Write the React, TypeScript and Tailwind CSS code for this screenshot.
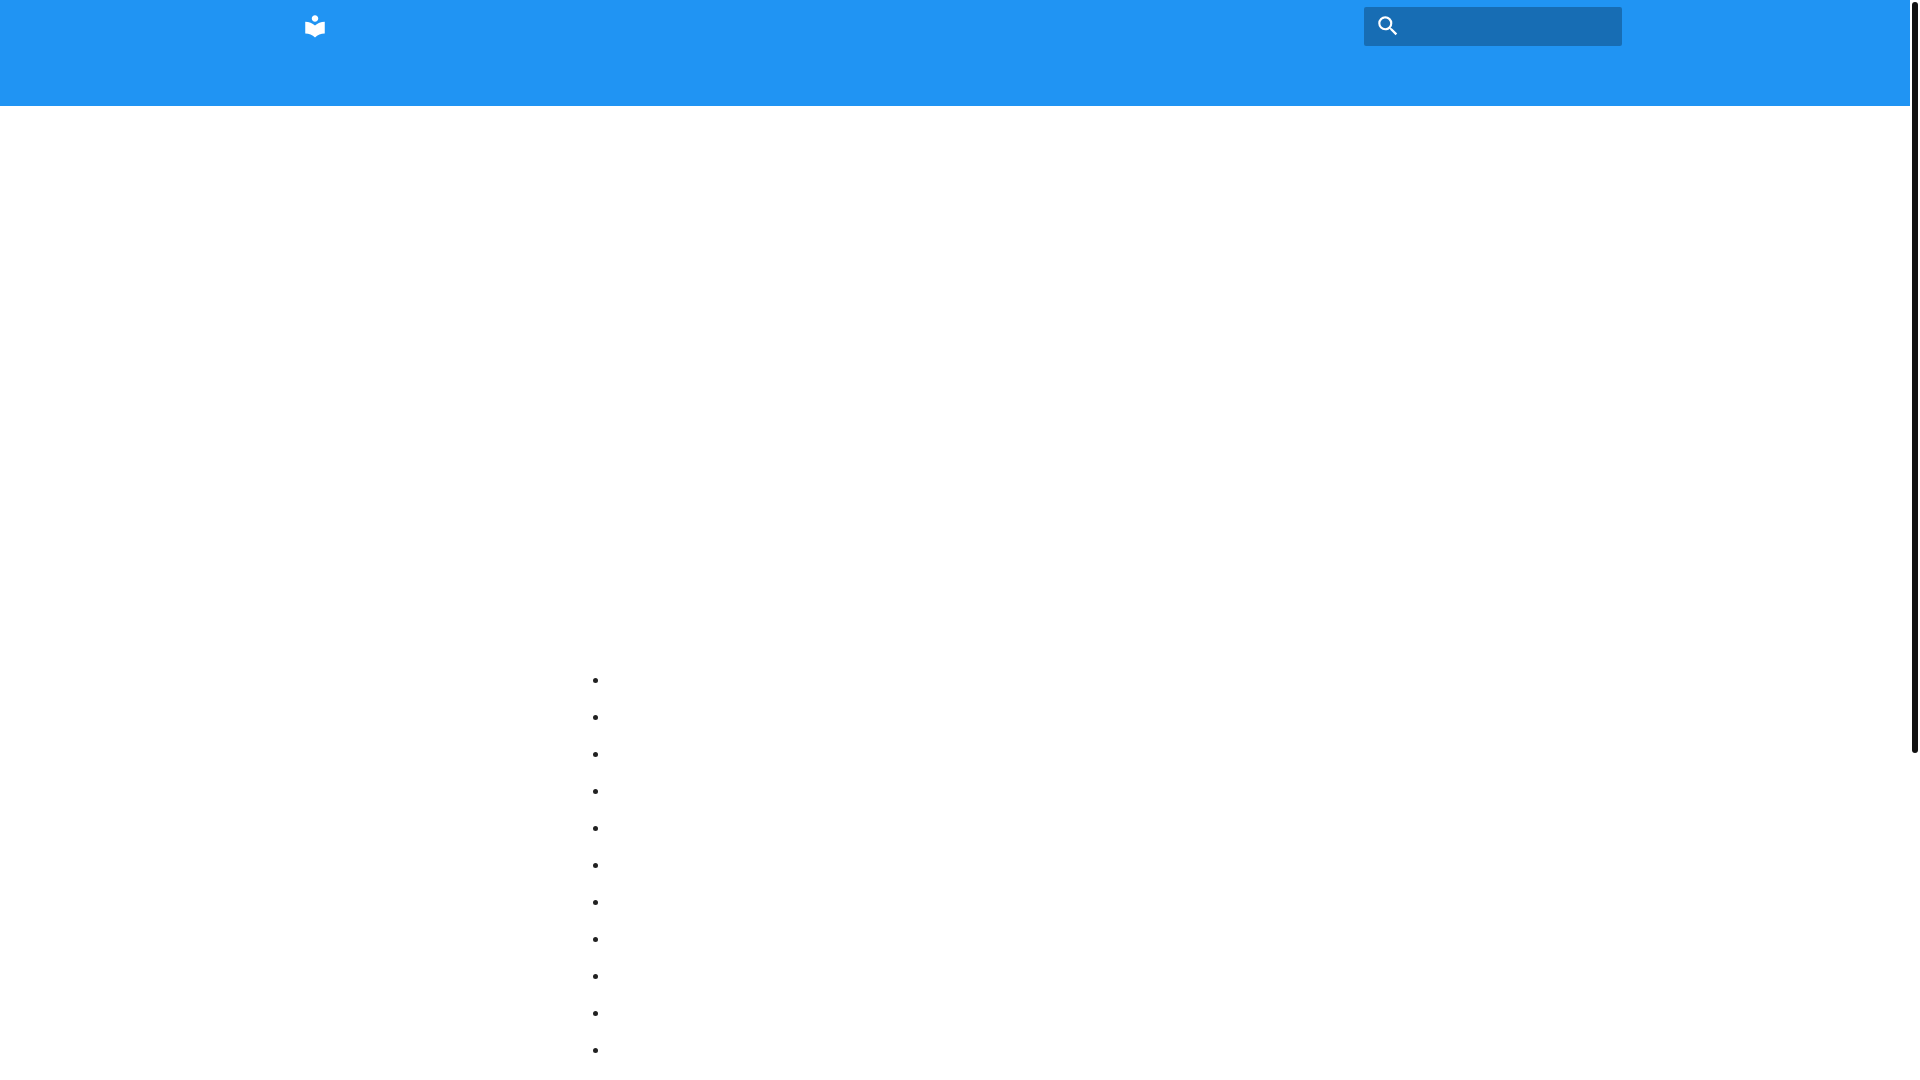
import React from 'react';

const LibraryIcon: React.FC = () => (
  <svg viewBox="0 0 24 24" className="w-[26px] h-[26px]" fill="currentColor" aria-hidden="true">
    <path d="M12 11.55C9.64 9.35 6.48 8 3 8v11c3.48 0 6.64 1.35 9 3.55 2.36-2.19 5.52-3.55 9-3.55V8c-3.48 0-6.64 1.35-9 3.55zM12 8c1.66 0 3-1.34 3-3s-1.34-3-3-3-3 1.34-3 3 1.34 3 3 3z" />
  </svg>
);

const SearchIcon: React.FC = () => (
  <svg viewBox="0 0 24 24" className="w-[26px] h-[26px]" fill="currentColor" aria-hidden="true">
    <path d="M15.5 14h-.79l-.28-.27A6.471 6.471 0 0 0 16 9.5 6.5 6.5 0 1 0 9.5 16c1.61 0 3.09-.59 4.23-1.57l.27.28v.79l5 4.99L20.49 19l-4.99-5zm-6 0C7.01 14 5 11.99 5 9.5S7.01 5 9.5 5 14 7.01 14 9.5 11.99 14 9.5 14z" />
  </svg>
);

const sections = Array.from({ length: 11 }, (_, index) => ({ id: index, title: '' }));

const Header: React.FC = () => (
  <header className="bg-[#2094f3] text-white pb-[53px]">
    <div className="max-w-[1342px] h-[53px] mx-auto px-1 flex items-center justify-between">
      <a href="#" aria-label="Home" className="ml-[14px] pb-[2px]">
        <LibraryIcon />
      </a>
      <form role="search" className="w-[258px] h-[39px] flex items-center bg-black/26 rounded-xs">
        <label htmlFor="search" aria-label="Search" className="pl-[11px] pb-[2px]">
          <SearchIcon />
        </label>
        <input
          id="search"
          type="text"
          className="flex-1 min-w-0 h-full px-3 bg-transparent text-base outline-none"
        />
      </form>
    </div>
  </header>
);

export default function App() {
  return (
    <div className="h-screen overflow-hidden flex bg-white font-['Liberation_Sans',sans-serif] text-black/87">
      <div className="flex-1 min-w-0">
        <Header />
        <main className="max-w-[1342px] mx-auto pl-[266px]">
          <article className="pt-[555px] px-[26px]">
            <ul className="list-disc pl-[33px] text-base">
              {sections.map((section) => (
                <li key={section.id} className="h-[37px] leading-[37px]">{section.title}</li>
              ))}
            </ul>
          </article>
        </main>
      </div>

      {/* Scroll track */}
      <div className="w-[10px] shrink-0 p-[2px]">
        <div className="h-[751px] rounded-full bg-[#111111]" />
      </div>
    </div>
  );
}
